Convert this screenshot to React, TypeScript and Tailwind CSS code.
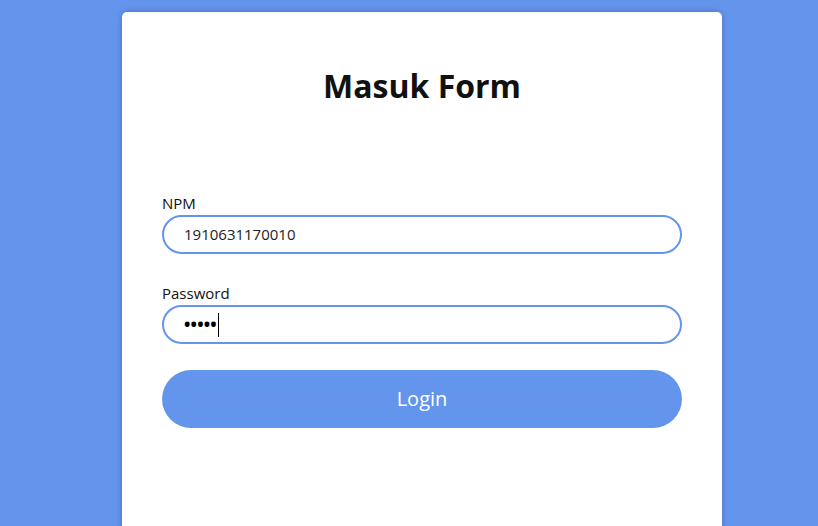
export default function App() {
  return (
    <div
      className="h-screen bg-[#6495ed] pt-3 pl-[122px] overflow-hidden"
      style={{ fontFamily: '"Open Sans", "Noto Sans", sans-serif' }}
    >
      {/* Card */}
      <div className="w-[600px] h-[560px] bg-white rounded-[5px] shadow-[0_0_6px_rgba(0,0,0,0.25)] px-10 pt-[50px]">
        <h1 className="text-[32px] leading-[48px] font-bold text-[#111] text-center">Masuk Form</h1>

        <div className="mt-[81px]">
          <label className="block text-[15px] leading-[24px] text-[#111]">NPM</label>
          <div className="h-[39px] rounded-full border-2 border-[#6495ed] flex items-center pl-5 text-[15px] text-[#222]">
            1910631170010
          </div>
        </div>

        <div className="mt-[27px]">
          <label className="block text-[15px] leading-[24px] text-[#111]">Password</label>
          <div className="h-[39px] rounded-full border-2 border-[#6495ed] flex items-center pl-5 text-black">
            <span className="text-[17px] font-bold tracking-[0.2px]">•••••</span>
            <span className="ml-[1px] w-px h-[24px] bg-black" />
          </div>
        </div>

        <button className="mt-[26px] w-full h-[58px] rounded-full bg-[#6495ed] text-white text-[20px]">
          Login
        </button>
      </div>
    </div>
  )
}
